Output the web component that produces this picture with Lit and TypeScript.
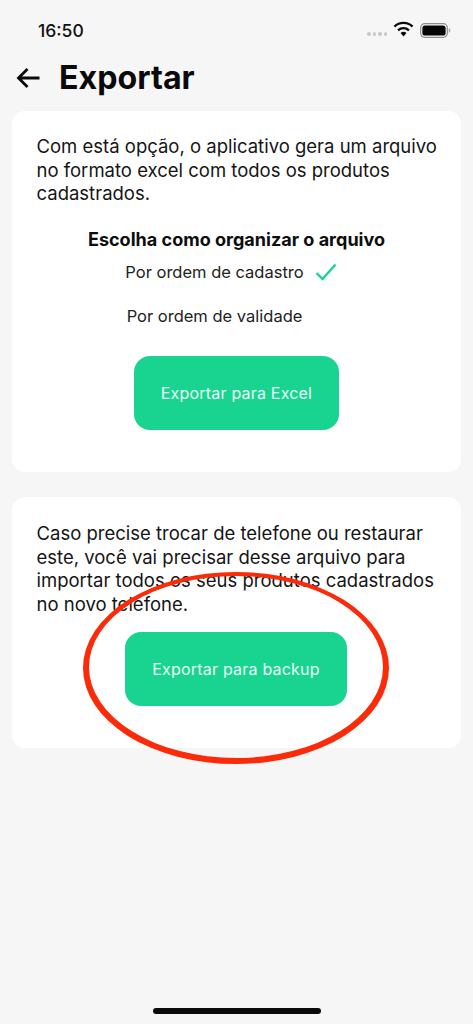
import { LitElement, html, css } from "lit";
import { customElement } from "lit/decorators.js";

@customElement("app-root")
export class AppRoot extends LitElement {
  static styles = css`
    :host { display: block; width: 473px; height: 1024px; background: #f6f6f6; position: relative; overflow: hidden; font-family: Inter, "Noto Sans", sans-serif; color: #111; }
    .status { height: 60px; display: flex; align-items: center; padding: 0 22px 0 38px; box-sizing: border-box; }
    .time { font-size: 17.5px; font-weight: 500; flex: 1; color: #111; }
    .status-icons { display: flex; align-items: center; gap: 6px; }
    .dots { display: flex; gap: 2px; margin-top: 8px; }
    .dots i { width: 3.5px; height: 3.5px; border-radius: 50%; background: #c9c9c9; }
    .wifi { margin-bottom: 2px; }
    .header { height: 36px; display: flex; align-items: center; padding-left: 16px; gap: 18px; }
    .header svg { display: block; }
    h1 { margin: 0; font-size: 32.2px; font-weight: 700; line-height: 36px; color: #0a0a0a; }
    .card { background: #fff; border-radius: 13px; margin: 0 12px; box-sizing: border-box; padding: 24px 24.5px 0; }
    .one { margin-top: 15px; height: 361px; }
    .two { margin-top: 25px; height: 251px; padding-top: 25px; }
    p { margin: 0 -6px 0 0; font-size: 18.5px; line-height: 23.7px; color: #151515; }
    .two p { line-height: 23.5px; }
    .sub { margin-top: 22px; font-size: 18.05px; font-weight: 700; line-height: 24px; text-align: center; color: #0d0d0d; }
    .option { display: flex; align-items: center; justify-content: center; font-size: 16.5px; line-height: 24px; color: #222; }
    .opt1 { margin-top: 8px; gap: 11px; padding-right: 11px; }
    .opt2 { margin-top: 20px; padding-right: 44px; }
    .btn { background: #19d491; color: #e9fbf4; border-radius: 16px; height: 74px; display: flex; align-items: center; justify-content: center; font-size: 16px; letter-spacing: 0.2px; margin-left: auto; margin-right: auto; }
    .excel { width: 205px; margin-top: 28px; }
    .backup { width: 222px; margin-top: 16px; margin-right: 89.5px; }
    .oval { position: absolute; left: 78px; top: 566px; pointer-events: none; }
    .home { position: absolute; left: 153px; top: 1008px; width: 168px; height: 6px; border-radius: 3px; background: #0a0a0a; }
  `;

  render() {
    return html`
      <div class="status">
        <div class="time">16:50</div>
        <div class="status-icons">
          <div class="dots"><i></i><i></i><i></i><i></i></div>
          <svg class="wifi" width="21" height="16" viewBox="0 0 20 15" aria-hidden="true">
            <path d="M10 14.6 7.2 11.4a4 4 0 0 1 5.6 0z" fill="#0a0a0a"/>
            <path d="M4.8 8.8a7.6 7.6 0 0 1 10.4 0" fill="none" stroke="#0a0a0a" stroke-width="2.2"/>
            <path d="M1.4 5.2a12.4 12.4 0 0 1 17.2 0" fill="none" stroke="#0a0a0a" stroke-width="2.2"/>
          </svg>
          <svg width="31" height="15" viewBox="0 0 31 15" aria-hidden="true">
            <rect x="0.7" y="0.7" width="26.6" height="13.6" rx="4" fill="none" stroke="#8d8d8d" stroke-width="1.2"/>
            <rect x="2.4" y="2.4" width="23.2" height="10.2" rx="2.6" fill="#050505"/>
            <path d="M28.8 5.2c1 .3 1.5 1.2 1.5 2.3s-.5 2-1.5 2.3z" fill="#a5a5a5"/>
          </svg>
        </div>
      </div>
      <div class="header">
        <svg width="25" height="22" viewBox="0 0 25 22" aria-hidden="true">
          <path d="M23.5 11H2.5M11.5 2 2.5 11l9 9" fill="none" stroke="#0a0a0a" stroke-width="2.8"/>
        </svg>
        <h1>Exportar</h1>
      </div>
      <section class="card one">
        <p>Com está opção, o aplicativo gera um arquivo no formato excel com todos os produtos cadastrados.</p>
        <div class="sub">Escolha como organizar o arquivo</div>
        <div class="option opt1">
          <span>Por ordem de cadastro</span>
          <svg width="22" height="18" viewBox="0 0 22 18" aria-hidden="true">
            <path d="M1.5 10 7.5 16 20.5 1.5" fill="none" stroke="#19d491" stroke-width="2.4"/>
          </svg>
        </div>
        <div class="option opt2"><span>Por ordem de validade</span></div>
        <div class="btn excel">Exportar para Excel</div>
      </section>
      <section class="card two">
        <p>Caso precise trocar de telefone ou restaurar este, você vai precisar desse arquivo para importar todos os seus produtos cadastrados no novo telefone.</p>
        <div class="btn backup">Exportar para backup</div>
      </section>
      <svg class="oval" width="316" height="204" viewBox="0 0 316 204" aria-hidden="true">
        <path fill="#fb2a08" fill-rule="evenodd" d="M5 102a153 96 0 1 0 306 0a153 96 0 1 0-306 0zM11 101a147 91 0 1 0 294 0a147 91 0 1 0-294 0z"/>
      </svg>
      <div class="home"></div>
    `;
  }
}
